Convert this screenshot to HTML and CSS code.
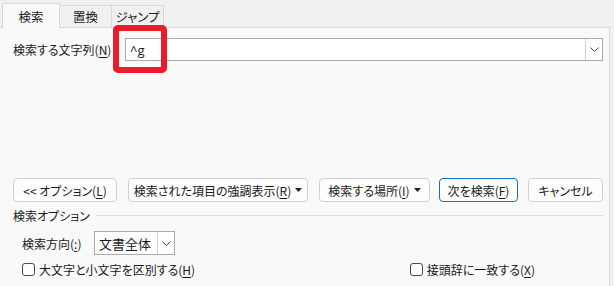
FILE: index.html
```html
<!DOCTYPE html>
<html lang="ja">
<head>
<meta charset="utf-8">
<link rel="stylesheet" href="styles.css">
</head>
<body>
<div class="window">
  <div class="tabs">
    <div class="tab active">検索</div>
    <div class="tab">置換</div>
    <div class="tab">ジャンプ</div>
  </div>
  <div class="panel">
    <div class="find-row">
      <span class="label">検索する文字列(<u>N</u>)</span>
      <div class="combo">
        <span class="combo-text">^g</span>
        <span class="combo-btn"><svg width="9" height="5" viewBox="0 0 9 5"><polyline points="0.5,0.5 4.5,4.5 8.5,0.5" fill="none" stroke="#444" stroke-width="1"/></svg></span>
      </div>
    </div>
    <div class="buttons">
      <div class="btn b1">&lt;&lt; オプション(<u>L</u>)</div>
      <div class="btn b2">検索された項目の強調表示(<u>R</u>)<svg class="tri" width="7" height="4" viewBox="0 0 7 4"><polygon points="0,0 7,0 3.5,4" fill="#222"/></svg></div>
      <div class="btn b3">検索する場所(<u>I</u>)<svg class="tri" width="7" height="4" viewBox="0 0 7 4"><polygon points="0,0 7,0 3.5,4" fill="#222"/></svg></div>
      <div class="btn b4 primary">次を検索(<u>F</u>)</div>
      <div class="btn b5">キャンセル</div>
    </div>
    <div class="group-title"><span class="gt-text">検索オプション</span><div class="line"></div></div>
    <div class="dir-row">
      <span class="label">検索方向(<u>:</u>)</span>
      <div class="select">
        <span class="select-text">文書全体</span>
        <span class="select-btn"><svg width="9" height="5" viewBox="0 0 9 5"><polyline points="0.5,0.5 4.5,4.5 8.5,0.5" fill="none" stroke="#444" stroke-width="1"/></svg></span>
      </div>
    </div>
    <div class="check-row">
      <label class="check c1"><span class="box"></span>大文字と小文字を区別する(<u>H</u>)</label>
      <label class="check c2"><span class="box"></span>接頭辞に一致する(<u>X</u>)</label>
    </div>
  </div>
  <div class="highlight"></div>
</div>
</body>
</html>
```

FILE: styles.css
```css
* { box-sizing: border-box; }
html, body {
  margin: 0;
  padding: 0;
  background: #f0f0f0;
}
body {
  width: 614px;
  height: 286px;
  overflow: hidden;
  font-family: "Noto Sans CJK JP", "Noto Sans", sans-serif;
  font-size: 12px;
  color: #1a1a1a;
  font-feature-settings: "palt";
}
u { text-decoration: underline; text-underline-offset: 2px; }
.window {
  position: relative;
  width: 614px;
  height: 286px;
}
.tabs {
  display: flex;
  align-items: flex-end;
  height: 27px;
  padding-left: 2px;
}
.tab {
  height: 22px;
  display: flex;
  align-items: center;
  justify-content: center;
  border: 1px solid #d9d9d9;
  border-bottom: none;
  margin-left: -1px;
  background: #f0f0f0;
  width: 53px;
  font-size: 12.5px;
  color: #1a1a1a;
}
.tab:first-child { margin-left: 0; }
.tab.active {
  width: 58px;
  background: #f9f9f9;
  margin-bottom: -1px;
  position: relative;
  z-index: 1;
  height: 25px;
  padding-top: 1px;
}
.panel {
  width: 610px;
  height: 259px;
  background: #f9f9f9;
  border-top: 1px solid #d9d9d9;
  border-right: 1px solid #d9d9d9;
  padding-left: 13px;
}
.find-row {
  display: flex;
  align-items: center;
  margin-top: 10px;
  height: 23px;
}
.find-row .label { width: 112px; }
.combo {
  width: 478px;
  height: 23px;
  border: 1px solid #a9a9b0;
  background: #fff;
  display: flex;
  align-items: center;
  justify-content: space-between;
}
.combo-text {
  padding-left: 4px;
  font-family: "Open Sans", "Noto Sans", sans-serif;
  font-size: 13px;
}
.combo-btn {
  width: 17px;
  height: 21px;
  border-left: 1px solid #d4d4d4;
  display: flex;
  align-items: center;
  justify-content: center;
  background: #fff;
}
.buttons {
  display: flex;
  margin-top: 117px;
  height: 24px;
}
.btn {
  height: 24px;
  border: 1px solid #d0d0d0;
  border-radius: 4px;
  background: #fdfdfd;
  display: flex;
  align-items: center;
  justify-content: center;
  font-size: 12px;
  white-space: nowrap;
}
.btn .tri { margin-left: 4px; }
.btn.primary { border-color: #1a6fc4; }
.b1 { width: 104px; }
.b2 { width: 180px; margin-left: 11px; }
.b3 { width: 111px; margin-left: 11px; }
.b4 { width: 79px; margin-left: 9px; }
.b5 { width: 75px; margin-left: 10px; }
.group-title {
  display: flex;
  align-items: center;
  margin-top: 5px;
  height: 16px;
}
.gt-text { white-space: nowrap; }
.group-title .line {
  flex: 1 1 auto;
  margin-left: 6px;
  margin-right: 6px;
  height: 1px;
  background: #dcdcdc;
}
.dir-row {
  display: flex;
  align-items: center;
  margin-top: 8px;
  padding-left: 9px;
  height: 24px;
}
.dir-row .label { width: 72px; }
.select {
  width: 81px;
  height: 24px;
  border: 1px solid #a9a9b0;
  background: #fff;
  display: flex;
  align-items: center;
  justify-content: space-between;
}
.select-text { padding-left: 4px; font-size: 13px; }
.select-btn {
  width: 17px;
  height: 22px;
  border-left: 1px solid #d4d4d4;
  display: flex;
  align-items: center;
  justify-content: center;
}
.check-row {
  display: flex;
  align-items: center;
  margin-top: 6px;
  padding-left: 9px;
  height: 16px;
}
.check {
  display: flex;
  align-items: center;
  white-space: nowrap;
}
.check .box {
  width: 13px;
  height: 13px;
  border: 1px solid #4a4a4a;
  border-radius: 3px;
  background: #fff;
  margin-right: 4px;
}
.c2 { margin-left: auto; margin-right: 74px; }
.highlight {
  position: absolute;
  left: 113px;
  top: 25px;
  width: 54px;
  height: 48px;
  border: 6px solid #ea1c2a;
  border-radius: 5px;
}
```
